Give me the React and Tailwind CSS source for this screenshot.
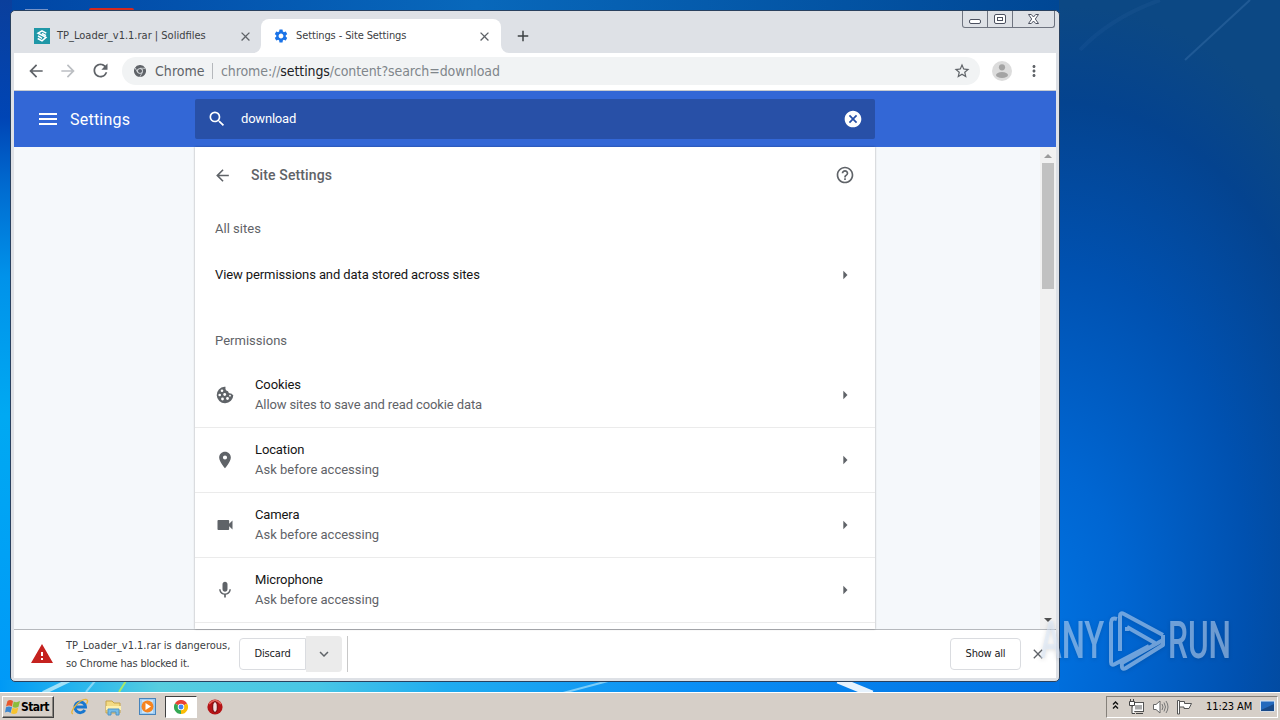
import {
  MdAdd,
  MdArrowBack,
  MdArrowForward,
  MdArrowRight,
  MdCancel,
  MdClose,
  MdHelpOutline,
  MdKeyboardArrowDown,
  MdLocationOn,
  MdMenu,
  MdMic,
  MdMoreVert,
  MdRefresh,
  MdSearch,
  MdSettings,
  MdStarBorder,
  MdVideocam,
  MdWarning,
} from "react-icons/md";

const permissions = [
  { icon: CookieIcon, title: "Cookies", status: "Allow sites to save and read cookie data", tracking: "tracking-[-0.12px]" },
  { icon: MdLocationOn, title: "Location", status: "Ask before accessing" },
  { icon: MdVideocam, title: "Camera", status: "Ask before accessing" },
  { icon: MdMic, title: "Microphone", status: "Ask before accessing" },
];

function CookieIcon({ size }) {
  return (
    <svg width={size} height={size} viewBox="0 0 20 20">
      <path
        d="M9.500 1.700 A8.300 8.300 0 1 0 18.300 10 Q17 9.700 16.300 8.500 Q13.500 9 13 6.300 Q9.800 5.500 10.500 1.750Z"
        fill="currentColor"
      />
      <g fill="#fff">
        <circle cx="7" cy="5.800" r="1.300" />
        <circle cx="4.700" cy="10" r="1.300" />
        <circle cx="9.700" cy="9.500" r="1.400" />
        <circle cx="7.500" cy="14" r="1.400" />
        <circle cx="12.500" cy="13.500" r="1.400" />
        <circle cx="15" cy="10.700" r="0.900" />
      </g>
    </svg>
  );
}

function ChromeLogo({ size, mono }) {
  const c = mono ? ["#5f6368", "#5f6368", "#5f6368"] : ["#e94235", "#fbbc05", "#34a853"];
  return (
    <svg width={size} height={size} viewBox="0 0 24 24">
      <path d="M12 12 L1.6 6 A12 12 0 0 1 22.4 6 Z" fill={c[0]} />
      <path d="M12 12 L22.4 6 A12 12 0 0 1 12 24 Z" fill={c[1]} />
      <path d="M12 12 L12 24 A12 12 0 0 1 1.6 6 Z" fill={c[2]} />
      {mono && (
        <path d="M12 6.5 H22.5 M7.2 14.8 L2 5.8 M16.8 14.8 L11.6 23.8" stroke="#eff2f5" strokeWidth="1.3" />
      )}
      <circle cx="12" cy="12" r="5.6" fill={mono ? "#eff2f5" : "#fff"} />
      <circle cx="12" cy="12" r="4.2" fill={mono ? "#5f6368" : "#4285f4"} />
    </svg>
  );
}

function WindowButtons() {
  return (
    <div className="absolute right-[1px] top-0 flex h-[17px] w-[93px] rounded-b-[3px] border border-t-0 border-[#6f7480]">
      <div className="flex w-[25px] items-center justify-center border-r border-[#6f7480] pt-[5px]">
        <div className="h-[5px] w-[12px] rounded-[2px] border border-[#4c5160] bg-white" />
      </div>
      <div className="flex w-[25px] items-center justify-center border-r border-[#6f7480]">
        <div className="flex h-[10px] w-[12px] items-center justify-center rounded-[2px] border border-[#4c5160] bg-white">
          <div className="h-[4px] w-[6px] border border-[#4c5160]" />
        </div>
      </div>
      <div className="flex flex-1 items-center justify-center">
        <svg width="13" height="12" viewBox="0 0 13 12">
          <path
            d="M1.5 1.5 H4.3 L6.5 4 L8.7 1.5 H11.5 L8.3 6 L11.5 10.5 H8.7 L6.5 8 L4.3 10.5 H1.5 L4.7 6 Z"
            fill="#fff"
            stroke="#4c5160"
          />
        </svg>
      </div>
    </div>
  );
}

function TabStrip() {
  return (
    <div className="relative flex h-[42px] items-end bg-[#dee1e6] pl-5 font-['DejaVu_Sans_Condensed','DejaVu_Sans',sans-serif] text-[11px] text-[#3c4043]">
      <div className="flex h-[34px] w-[227px] items-center">
        <svg width="16" height="16" viewBox="0 0 16 16">
          <rect width="16" height="16" fill="#1f97a7" />
          <path
            d="M12.3 5.2 L8 2.8 L4 5.2 L12 9.4 L8 12.8 L3.7 10.5 M4 7.8 L8 10.3 M8 5.4 L12 7.6"
            fill="none"
            stroke="#fff"
            strokeWidth="1.5"
          />
        </svg>
        <span className="mt-px ml-[7px] w-[181px] whitespace-nowrap">TP_Loader_v1.1.rar | Solidfiles</span>
        <MdClose size={15} className="text-[#5f6368]" />
      </div>
      <div className="relative flex h-[34px] w-60 items-center rounded-t-lg bg-white pl-3">
        <svg className="absolute bottom-0 -left-2" width="8" height="8">
          <path d="M8 0 V8 H0 A8 8 0 0 0 8 0Z" fill="#fff" />
        </svg>
        <svg className="absolute -right-2 bottom-0" width="8" height="8">
          <path d="M0 0 V8 H8 A8 8 0 0 1 0 0Z" fill="#fff" />
        </svg>
        <MdSettings size={16} className="text-[#1a73e8]" />
        <span className="mt-px ml-[7px] w-[181px] whitespace-nowrap tracking-[-0.12px]">Settings - Site Settings</span>
        <MdClose size={15} className="text-[#5f6368]" />
      </div>
      <MdAdd size={18} className="mb-2 ml-[13px] text-[#3c4043]" />
      <WindowButtons />
    </div>
  );
}

function Toolbar() {
  return (
    <div className="flex h-[38px] items-center border-b border-[#c8cbd0] bg-white pb-[2px] pl-3 text-[#5f6368]">
      <MdArrowBack size={20} />
      <MdArrowForward size={20} className="ml-3 text-[#bcbfc3]" />
      <MdRefresh size={21} className="ml-3" />
      <div className="ml-[11px] flex h-7 w-[858px] items-center rounded-full bg-[#f1f3f4] pr-[9px] pl-3 font-['DejaVu_Sans_Condensed','DejaVu_Sans',sans-serif] text-sm">
        <ChromeLogo size={12} mono />
        <span className="ml-[9px] w-[57px] tracking-[0.05px]">Chrome</span>
        <div className="h-4 w-px bg-[#b5b8bc]" />
        <span className="ml-2 flex-1 tracking-[-0.1px] text-[#80868b]">
          chrome://<span className="text-[#202124]">settings</span>/content?search=download
        </span>
        <MdStarBorder size={18} />
      </div>
      <svg className="ml-3" width="20" height="20" viewBox="0 0 20 20">
        <circle cx="10" cy="10" r="10" fill="#dcdcdc" />
        <circle cx="10" cy="6.3" r="3.1" fill="#a4a4a4" />
        <ellipse cx="10" cy="14" rx="6" ry="3" fill="#a4a4a4" />
      </svg>
      <MdMoreVert size={18} className="ml-[13px]" />
    </div>
  );
}

function SettingsHeader() {
  return (
    <div className="flex h-14 items-center bg-[#3367d6] pl-[22px] text-white">
      <MdMenu size={24} />
      <span className="mt-0.5 ml-2.5 w-[125px] text-base tracking-[0.22px]">Settings</span>
      <div className="flex h-10 w-[680px] items-center rounded-[2px] bg-[#2850a7] pr-3 pl-3">
        <MdSearch size={20} />
        <span className="ml-3.5 flex-1 text-[13px] tracking-[-0.2px]">download</span>
        <MdCancel size={20} />
      </div>
    </div>
  );
}

function SettingsPage() {
  return (
    <div className="flex h-[482px] bg-[#f5f8fb]">
      <div className="w-[181px]" />
      <main className="h-full w-[680px] overflow-hidden bg-white text-[13px] text-[#5f6368] shadow-[0_0_2px_rgba(0,0,0,0.35)]">
        <div className="flex h-14 items-center px-5">
          <MdArrowBack size={19} className="-ml-[2px]" />
          <h1 className="ml-[19px] flex-1 text-sm font-medium tracking-[0.12px]">Site Settings</h1>
          <MdHelpOutline size={20} />
        </div>
        <h2 className="pt-4 pl-5 leading-5 tracking-[0.02px]">All sites</h2>
        <div className="mt-[11px] flex h-[50px] items-center pr-5 pl-5 text-[#151515]">
          <span className="flex-1 tracking-[-0.1px]">View permissions and data stored across sites</span>
          <MdArrowRight size={20} className="text-[#5f6368]" />
        </div>
        <h2 className="mt-[31px] h-8 pl-5 leading-5 tracking-[0.02px]">Permissions</h2>
        {permissions.map(({ icon: Icon, title, status, tracking }) => (
          <div key={title} className="flex h-[65px] items-center border-b border-[#ebebeb] px-5">
            <Icon size={20} />
            <div className="ml-5 flex-1 leading-5">
              <div className="tracking-[-0.12px] text-[#151515]">{title}</div>
              <div className={tracking}>{status}</div>
            </div>
            <MdArrowRight size={20} />
          </div>
        ))}
      </main>
      <div className="flex-1" />
      <div className="flex w-4 flex-col items-center bg-[#f1f1f1] pt-[7px] pb-[7px]">
        <div className="border-x-4 border-b-4 border-x-transparent border-b-[#9b9b9b]" />
        <div className="mt-[5px] h-[126px] w-3 bg-[#c1c1c1]" />
        <div className="mt-auto border-x-4 border-t-4 border-x-transparent border-t-[#505050]" />
      </div>
    </div>
  );
}

function DownloadBar() {
  return (
    <div className="flex h-[49px] items-center border-t border-[#b6b9bd] bg-white pl-4 font-['DejaVu_Sans_Condensed','DejaVu_Sans',sans-serif] text-[11px] text-[#3c4043]">
      <MdWarning size={24} className="text-[#c5221f]" />
      <div className="mt-0.5 ml-3 w-[173px] leading-[18px] whitespace-nowrap">
        TP_Loader_v1.1.rar is dangerous,
        <br />
        <span className="tracking-[-0.18px]">so Chrome has blocked it.</span>
      </div>
      <div className="flex h-8 w-[67px] items-center justify-center rounded-l border border-[#dadce0] pt-px tracking-[-0.15px] text-[#202124]">
        Discard
      </div>
      <div className="flex h-9 w-9 items-center justify-center rounded-r bg-[#ebebeb]">
        <MdKeyboardArrowDown size={18} className="text-[#5f6368]" />
      </div>
      <div className="ml-[5px] h-9 w-px bg-[#c8c8c8]" />
      <div className="ml-auto flex h-8 w-[71px] items-center justify-center rounded border border-[#dadce0] tracking-[-0.2px] text-[#202124]">
        Show all
      </div>
      <MdClose size={16} className="mr-2.5 ml-[9px] text-[#5f6368]" />
    </div>
  );
}

function Wallpaper() {
  return (
    <svg className="absolute inset-0" width="1280" height="692" viewBox="0 0 1280 692">
      <defs>
        <linearGradient id="left" x1="0" y1="0" x2="0" y2="1">
          <stop offset="0" stopColor="#0a3f9c" />
          <stop offset="0.17" stopColor="#0045b5" />
          <stop offset="0.27" stopColor="#006bd0" />
          <stop offset="0.4" stopColor="#0092ea" />
          <stop offset="0.6" stopColor="#00a9f2" />
          <stop offset="1" stopColor="#0099f8" />
        </linearGradient>
        <radialGradient
          id="right"
          gradientUnits="userSpaceOnUse"
          cx="0"
          cy="0"
          r="1"
          gradientTransform="translate(1000 650) rotate(10) scale(400 650)"
        >
          <stop offset="0" stopColor="#0078e8" />
          <stop offset="0.3" stopColor="#0066d2" />
          <stop offset="0.6" stopColor="#0051b0" />
          <stop offset="0.85" stopColor="#04438f" />
          <stop offset="1" stopColor="#0c4884" />
        </radialGradient>
        <linearGradient id="bottom" x1="0" y1="0" x2="1" y2="0">
          <stop offset="0" stopColor="#0099f5" />
          <stop offset="0.07" stopColor="#25b4ee" />
          <stop offset="0.15" stopColor="#56cddf" />
          <stop offset="0.3" stopColor="#48c6e6" />
          <stop offset="0.42" stopColor="#20acf0" />
          <stop offset="0.65" stopColor="#0b8ff5" />
          <stop offset="1" stopColor="#0070e2" />
        </linearGradient>
        <linearGradient id="top" x1="0" y1="0" x2="1" y2="0">
          <stop offset="0" stopColor="#0045a5" />
          <stop offset="0.45" stopColor="#0868bb" />
          <stop offset="1" stopColor="#004795" />
        </linearGradient>
      </defs>
      <rect width="1280" height="692" fill="url(#right)" />
      <rect width="1059" height="12" fill="url(#top)" />
      <rect width="12" height="692" fill="url(#left)" />
      <rect y="680" width="1059" height="12" fill="url(#bottom)" />
      <path d="M43 693 L70 680" stroke="#c4effa" strokeWidth="4" opacity="0.8" />
      <path d="M86 692 L95 681 M563 693 L608 681" stroke="#a9e2fa" strokeWidth="2" opacity="0.7" />
      <path d="M119 692 L126 681" stroke="#a8e86a" strokeWidth="2" />
      <path d="M838 680 L872 694" stroke="#fff" strokeWidth="7" opacity="0.9" />
      <path d="M1185 60 L1250 0" stroke="#5d91c8" strokeWidth="2" opacity="0.25" />
      <path d="M1080 50 Q1110 18 1160 0" stroke="#5d91c8" strokeWidth="4" fill="none" opacity="0.08" />
      <rect x="89" y="8" width="45" height="5" rx="2" fill="#d5291f" />
      <rect x="25" y="9" width="23" height="2" fill="#7894c8" />
    </svg>
  );
}

// Narrow lettering on both sides of the play mark
function Watermark() {
  return (
    <div className="absolute top-[605px] left-[1040px] flex h-[70px] text-[51px] leading-[72px] font-medium text-[#dce9fb]/50 [filter:drop-shadow(0_1px_2px_rgba(0,0,0,0.25))]">
      <div className="w-[68px]">
        <span className="inline-block origin-left scale-x-[0.64]">ANY</span>
      </div>
      <svg width="60" height="70" viewBox="72 0 60 70">
        <path
          d="M82 14 Q76 12 76 18 V57 Q76 61 80 59 L114 41 M85 46 V11 Q85 7 89 9 L128 30 M128 30 V35 M92 22 L120 38 M92 22 V26 M128 35 L87 58 Q86 66 91 63 L128 40 V34"
          transform="translate(-1 0)"
          fill="none"
          stroke="currentColor"
          strokeWidth="4"
          strokeLinejoin="round"
        />
      </svg>
      <div className="w-[72px]">
        <span className="inline-block origin-left scale-x-[0.62]">RUN</span>
      </div>
    </div>
  );
}

function Taskbar() {
  return (
    <div className="flex h-7 items-center border-t border-white bg-[#d6cfc8] px-0.5 font-['DejaVu_Sans_Condensed','DejaVu_Sans',sans-serif] text-[11px] text-black">
      <div className="flex h-[22px] w-[52px] items-center border border-t-white border-r-[#404040] border-b-[#404040] border-l-white pl-0.5 shadow-[inset_-1px_-1px_0_#8a8680]">
        <svg width="16" height="16" viewBox="0 0 16 16">
          <path d="M2.500 2 Q5 0 8 2 L7 7.500 Q4 5.500 1 7.500Z" fill="#e8572b" />
          <path d="M8.700 2.500 Q11.500 4 15 2 L13.500 7.800 Q10.500 9.500 7.600 8Z" fill="#8bbd3b" />
          <path d="M1 8.300 Q4 6.500 7 8.300 L5.500 14 Q3 12 0 13.500Z" fill="#3c87d0" />
          <path d="M7.500 8.800 Q10.500 10.500 13.300 8.600 L12 14 Q9 16 6 14.300Z" fill="#f6c32f" />
        </svg>
        <span className="text-[12px] font-bold tracking-[-0.6px]">Start</span>
      </div>
      <svg className="ml-[17px]" width="18" height="18" viewBox="0 0 18 18">
        <path d="M13.800 12 A5.300 5.300 0 1 1 14.500 9 H5" fill="none" stroke="#1877cf" strokeWidth="3" />
        <path d="M2 16 Q-1 15 3.500 9 Q10 1 15 1.500 Q18 2 15.500 6" fill="none" stroke="#e8b53b" strokeWidth="1.300" />
      </svg>
      <svg className="ml-4" width="17" height="18" viewBox="0 0 17 18">
        <path d="M1 3 H7 L9 5 H15 V15 H1Z" fill="#f3da83" stroke="#c5a34a" />
        <path d="M1 8 H16 V12 H1Z" fill="#fff1ad" />
        <path d="M3 17 V11 H14 V17 H11 V14 H6 V17Z" fill="#75bde8" stroke="#5293c4" />
      </svg>
      <svg className="ml-[17px]" width="17" height="17" viewBox="0 0 17 17">
        <rect x="0.500" y="0.500" width="16" height="16" fill="#9fcdf3" stroke="#4683bb" />
        <rect x="3" y="2" width="11" height="13" fill="#c9e5fb" />
        <circle cx="8.500" cy="8.500" r="6" fill="#f58420" />
        <path d="M6.500 5 L12 8.500 L6.500 12Z" fill="#fff" />
      </svg>
      <div className="ml-[9px] flex h-[22px] w-8 items-center justify-center border border-t-[#404040] border-r-white border-b-white border-l-[#404040] bg-white">
        <ChromeLogo size={14} />
      </div>
      <svg className="ml-2.5" width="16" height="16" viewBox="0 0 16 16">
        <circle cx="8" cy="8" r="7.600" fill="#b51215" />
        <path d="M2 5 Q8 -2 14 5" stroke="#e2675e" strokeWidth="1.500" fill="none" />
        <ellipse cx="8" cy="8" rx="2.300" ry="5.300" fill="#f3dfdf" stroke="#6e0508" />
      </svg>
      <div className="ml-auto flex h-[22px] w-[172px] items-center border border-t-[#85807a] border-r-white border-b-white border-l-[#85807a]">
        <svg className="mb-0.5 ml-[5px]" width="7" height="11" viewBox="0 0 7 11">
          <path d="M1 4.500 L3.500 2 L6 4.500 M1 8.500 L3.500 6 L6 8.500" fill="none" stroke="#111" strokeWidth="1.400" />
        </svg>
        <svg className="ml-[9px]" width="17" height="16" viewBox="0 0 17 16">
          <rect x="4.500" y="3.500" width="11" height="9" fill="#fff" stroke="#555" />
          <rect x="7" y="6" width="7" height="4.500" fill="#aaa" />
          <path d="M8 14.500 H15 M1.500 2.500 H6.500 V6.500 H1.500Z M2.500 0 V2.500 M5.500 0 V2.500 M4 6.500 V14.500 H7" fill="#fff" stroke="#444" />
        </svg>
        <svg className="ml-[7px]" width="17" height="16" viewBox="0 0 17 16">
          <path d="M1.500 5.500 H4 L8 2 V14 L4 10.500 H1.500Z" fill="#fff" stroke="#666" />
          <path d="M10 5 Q12 8 10 11 M12 3.500 Q15 8 12 12.500 M14 2 Q18 8 14 14" fill="none" stroke="#777" />
        </svg>
        <svg className="ml-[7px]" width="17" height="16" viewBox="0 0 17 16">
          <path d="M1.500 15 V1.500 H3.500 V15Z M3.500 2.500 H8.500 V4.500 H15.500 L13 9.500 H8 V8 H3.500" fill="#fff" stroke="#555" />
        </svg>
        <span className="mt-px ml-[13px] w-[54px] whitespace-nowrap tracking-[-0.1px]">11:23 AM</span>
        <svg width="15" height="13" viewBox="0 0 15 13">
          <rect x="0.500" y="1" width="14" height="10" fill="#2369bd" stroke="#d5e5f7" />
          <path d="M1 10 L14 4 V11 H1Z" fill="#174989" />
        </svg>
      </div>
    </div>
  );
}

export default function App() {
  return (
    <div className="relative flex h-[720px] w-[1280px] flex-col overflow-hidden font-[Roboto,sans-serif]">
      <div className="relative flex-1">
        <Wallpaper />
        <div className="absolute top-[10px] left-[10px] h-[672px] w-[1050px] overflow-hidden rounded-[5px] border border-[#29415f] bg-[#dee1e6] px-[3px]">
          <TabStrip />
          <Toolbar />
          <SettingsHeader />
          <SettingsPage />
          <DownloadBar />
        </div>
        <Watermark />
      </div>
      <Taskbar />
    </div>
  );
}
